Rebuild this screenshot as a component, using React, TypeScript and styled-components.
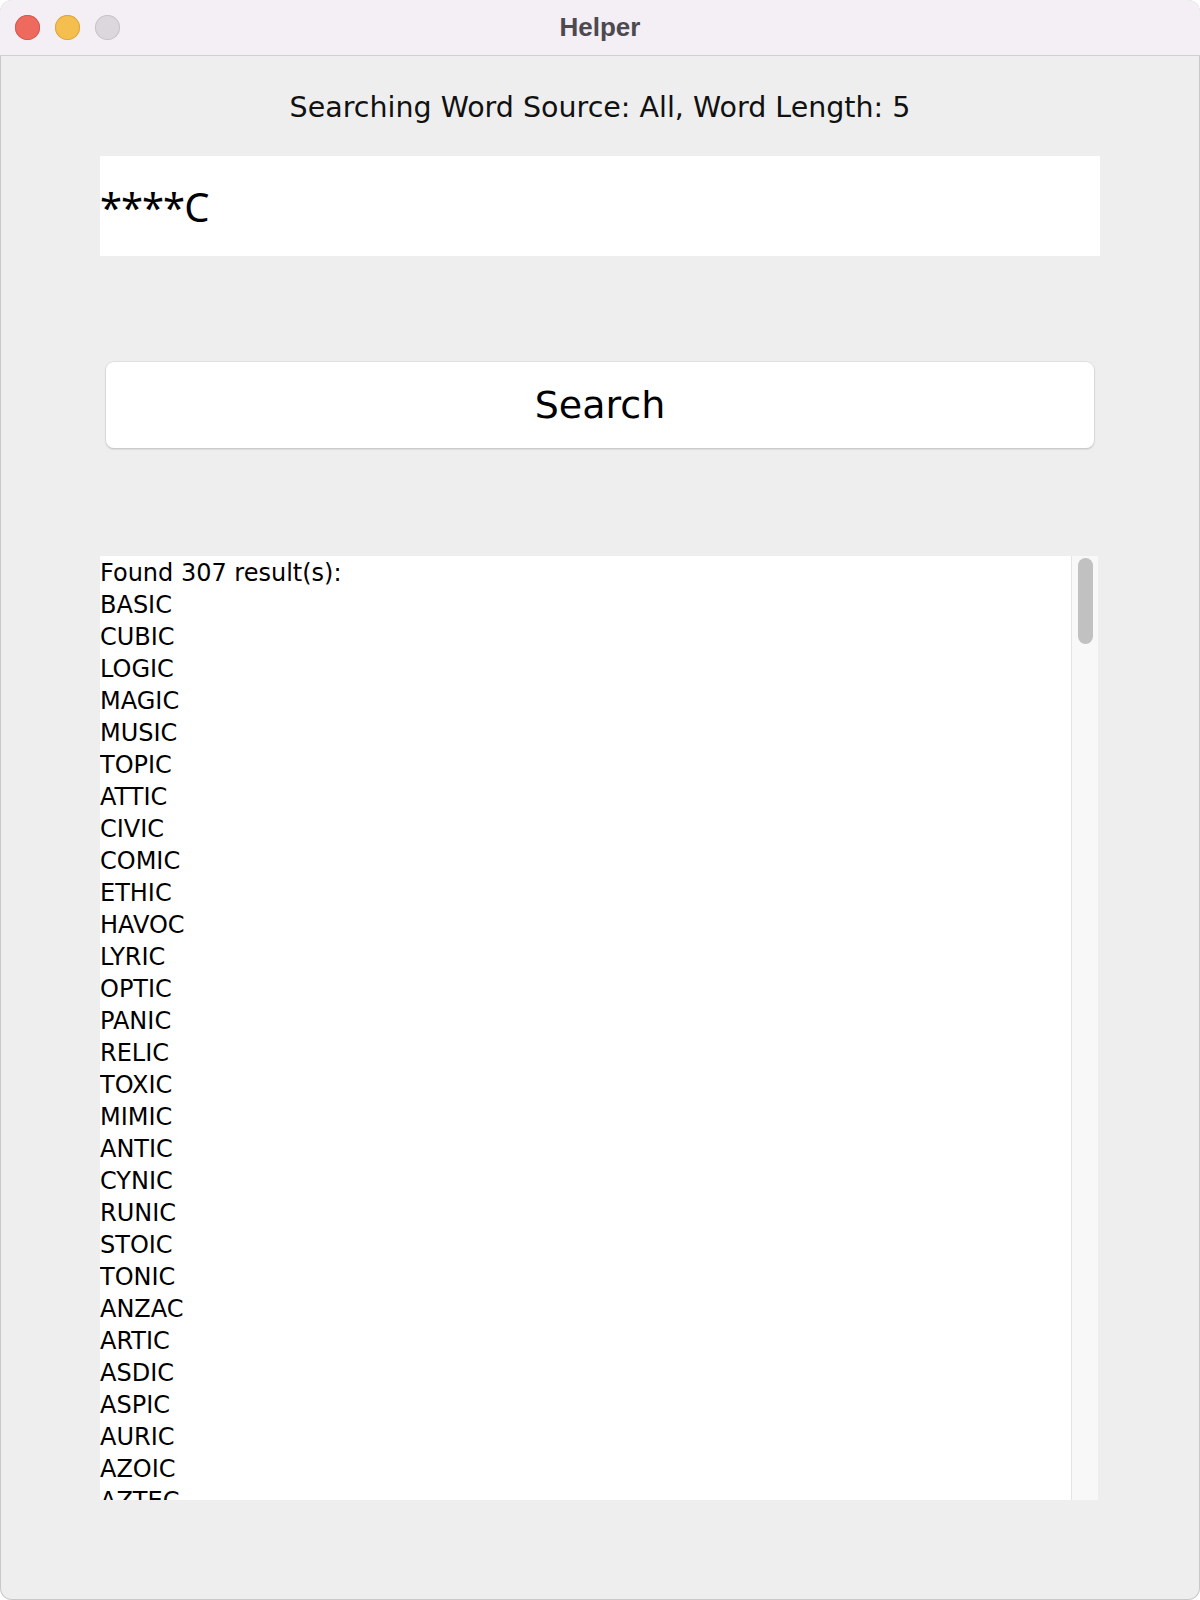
import React from 'react';
import styled, { createGlobalStyle } from 'styled-components';

const GlobalStyle = createGlobalStyle`
    html, body {
        margin: 0;
        padding: 0;
        background: #ffffff;
    }
    * {
        box-sizing: border-box;
    }
`;

//창 전체
const Window = styled.div`
    width: 1200px;
    height: 1600px;
    display: flex;
    flex-direction: column;
    background-color: #eeeeee;
    border-radius: 12px;
    overflow: hidden;
    box-shadow: inset 0 0 0 1px #c9c9c9;
`;
const TitleBar = styled.div`
    position: relative;
    height: 56px;
    flex-shrink: 0;
    display: flex;
    align-items: center;
    justify-content: center;
    background-color: #f4eef5;
    border-bottom: 1px solid #d2d0d3;
`;
const Lights = styled.div`
    position: absolute;
    left: 15px;
    top: 15px;
    display: flex;
    gap: 15px;
`;
const Light = styled.span<{ color: string; edge: string }>`
    width: 25px;
    height: 25px;
    border-radius: 50%;
    background-color: ${({ color }) => color};
    box-shadow: inset 0 0 0 1px ${({ edge }) => edge};
`;
const Title = styled.div`
    font-family: 'Liberation Sans', Arial, sans-serif;
    font-weight: bold;
    font-size: 26px;
    color: #4d4a4f;
`;
const Content = styled.div`
    flex: 1;
    min-height: 0;
    display: flex;
    flex-direction: column;
    padding: 0 100px 100px 100px;
`;
const Header = styled.div`
    height: 100px;
    display: flex;
    align-items: center;
    justify-content: center;
    padding-top: 2px;
    font-family: 'Comic Sans MS', 'DejaVu Sans', sans-serif;
    font-size: 28.5px;
    color: #111111;
`;
const PatternField = styled.div`
    height: 100px;
    display: flex;
    align-items: center;
    background-color: #ffffff;
    font-family: 'Lucida Grande', 'Noto Sans', sans-serif;
    font-size: 40px;
    letter-spacing: -1px;
    color: #000000;
`;
const ButtonRow = styled.div`
    padding: 106px 6px 108px 6px;
`;
const SearchButton = styled.button`
    width: 100%;
    height: 86px;
    border: none;
    border-radius: 8px;
    background-color: #ffffff;
    box-shadow: 0 0 0 0.5px #d4d4d4, 0 1px 2px rgba(0, 0, 0, 0.25);
    font-family: 'Comic Sans MS', 'DejaVu Sans', sans-serif;
    font-size: 38px;
    color: #000000;
    cursor: pointer;
`;
const ResultsPane = styled.div`
    flex: 1;
    min-height: 0;
    display: flex;
    margin-right: 2px;
    background-color: #ffffff;
`;
const ResultsText = styled.div`
    flex: 1;
    overflow: hidden;
    padding-top: 1px;
    font-family: 'Lucida Grande', 'DejaVu Sans', sans-serif;
    font-size: 24px;
    line-height: 32px;
    color: #000000;
`;
const Line = styled.div`
    white-space: nowrap;
`;
const ScrollTrack = styled.div`
    width: 27px;
    flex-shrink: 0;
    padding: 2px 0 0 6px;
    background-color: #f8f8f8;
    border-left: 1px solid #e4e4e4;
`;
const ScrollThumb = styled.div`
    width: 15px;
    height: 86px;
    border-radius: 8px;
    background-color: #c1c1c1;
`;

const words = [
    'BASIC', 'CUBIC', 'LOGIC', 'MAGIC', 'MUSIC', 'TOPIC', 'ATTIC', 'CIVIC', 'COMIC', 'ETHIC',
    'HAVOC', 'LYRIC', 'OPTIC', 'PANIC', 'RELIC', 'TOXIC', 'MIMIC', 'ANTIC', 'CYNIC', 'RUNIC',
    'STOIC', 'TONIC', 'ANZAC', 'ARTIC', 'ASDIC', 'ASPIC', 'AURIC', 'AZOIC', 'AZTEC',
];

const App: React.FC = () => {
    return (
        <>
            <GlobalStyle />
            <Window>
                <TitleBar>
                    <Lights>
                        <Light color="#ee6a5f" edge="#d9574d" />
                        <Light color="#f5bf4f" edge="#dda63a" />
                        <Light color="#dcd7dc" edge="#c8c3c8" />
                    </Lights>
                    <Title>Helper</Title>
                </TitleBar>
                <Content>
                    <Header>Searching Word Source: All, Word Length: 5</Header>
                    <PatternField>****C</PatternField>
                    <ButtonRow>
                        <SearchButton>Search</SearchButton>
                    </ButtonRow>
                    <ResultsPane>
                        <ResultsText>
                            <Line>Found 307 result(s):</Line>
                            {words.map((w) => (
                                <Line key={w}>{w}</Line>
                            ))}
                        </ResultsText>
                        <ScrollTrack>
                            <ScrollThumb />
                        </ScrollTrack>
                    </ResultsPane>
                </Content>
            </Window>
        </>
    );
};

export default App;
